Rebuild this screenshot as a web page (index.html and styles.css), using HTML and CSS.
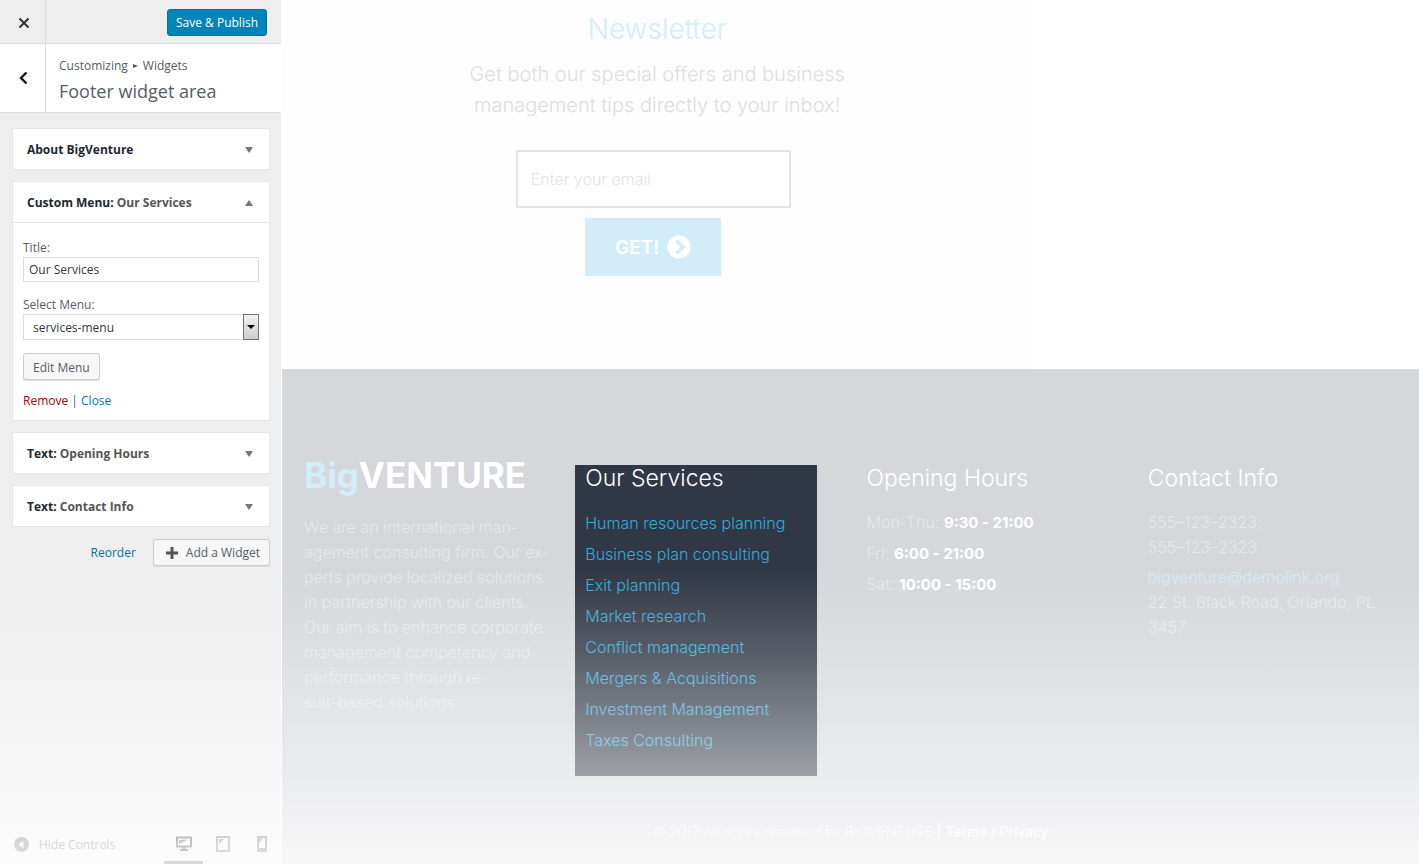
FILE: index.html
```html
<!DOCTYPE html>
<html lang="en">
<head>
<meta charset="utf-8">
<title>Customize: Footer widget area</title>
<link rel="stylesheet" href="styles.css">
</head>
<body>
<div class="app">
  <aside class="panel">
    <header class="panel-top">
      <button class="close" type="button" aria-label="Close customizer"><svg width="12" height="12" viewBox="0 0 12 12"><path d="M1.500 1.500l9 9m0-9l-9 9" stroke="#333" stroke-width="2"/></svg></button>
      <button class="btn-primary" type="button">Save &amp; Publish</button>
    </header>
    <div class="panel-title">
      <button class="back" type="button" aria-label="Back"><svg width="9" height="14" viewBox="0 0 9 14"><path d="M7.500 1.500L2 7l5.500 5.500" fill="none" stroke="#111" stroke-width="2.400"/></svg></button>
      <div class="titles">
        <p class="crumbs">Customizing <svg width="5" height="4" viewBox="0 0 5 4"><path d="M0 0l5 2-5 2z" fill="#555"/></svg> Widgets</p>
        <h1>Footer widget area</h1>
      </div>
    </div>
    <div class="widgets">
      <section class="widget"><button class="widget-head" type="button"><span>About BigVenture</span><i class="caret"></i></button></section>
      <section class="widget">
        <button class="widget-head" type="button"><span>Custom Menu: <em>Our Services</em></span><i class="caret up"></i></button>
        <div class="widget-body">
          <label for="title">Title:</label>
          <input class="field" id="title" type="text" value="Our Services">
          <label for="menu" class="menu-label">Select Menu:</label>
          <div class="select-wrap">
            <select id="menu" class="field"><option>services-menu</option></select>
            <span class="drop"><svg width="8" height="4" viewBox="0 0 8 4"><path d="M0 0h8L4 4z" fill="#000"/></svg></span>
          </div>
          <button class="btn edit" type="button">Edit Menu</button>
          <p class="links"><a class="remove" href="#">Remove</a> | <a href="#">Close</a></p>
        </div>
      </section>
      <section class="widget"><button class="widget-head" type="button"><span>Text: <em>Opening Hours</em></span><i class="caret"></i></button></section>
      <section class="widget"><button class="widget-head" type="button"><span>Text: <em>Contact Info</em></span><i class="caret"></i></button></section>
      <div class="widget-actions">
        <a href="#">Reorder</a>
        <button class="btn add" type="button"><svg width="12" height="12" viewBox="0 0 12 12"><path d="M6 0v12M0 6h12" stroke="#555" stroke-width="3"/></svg>Add a Widget</button>
      </div>
    </div>
    <footer class="panel-foot">
      <button class="hide" type="button"><svg width="15" height="15" viewBox="0 0 15 15"><circle cx="7.500" cy="7.500" r="7.500" fill="#555d66"/><path d="M9.500 3.500v8l-5-4z" fill="#eee"/></svg>Hide Controls</button>
      <div class="devices">
        <button class="device active" type="button" aria-label="Desktop"><svg width="16" height="16" viewBox="0 0 16 16"><path d="M1 1.500h14v9H1z" fill="none" stroke="#111" stroke-width="2"/><path d="M3 8V4l9-.500z" fill="#333"/><path d="M6.500 11h3v2H12v2H4v-2h2.500z" fill="#111"/></svg></button>
        <button class="device" type="button" aria-label="Tablet"><svg width="14" height="16" viewBox="0 0 14 16"><path d="M1 1h12v14H1z" fill="none" stroke="#555d66" stroke-width="2"/><path d="M3 8V3h5z" fill="#555d66"/></svg></button>
        <button class="device" type="button" aria-label="Mobile"><svg width="10" height="16" viewBox="0 0 10 16"><path d="M1 1h8v12.500H1z" fill="none" stroke="#555d66" stroke-width="2"/><path d="M0 12h10v4H0zM2 7V2.500h4z" fill="#555d66"/></svg></button>
      </div>
    </footer>
  </aside>
  <main class="site">
    <section class="news">
      <div class="news-inner">
        <h2>Newsletter</h2>
        <p>Get both our special offers and business<br>management tips directly to your inbox!</p>
        <form class="signup">
          <input type="email" placeholder="Enter your email" aria-label="Enter your email">
          <button type="button">GET! <svg width="24" height="24" viewBox="0 0 24 24"><circle cx="12" cy="12" r="11.500" fill="#fff"/><path d="M9.500 5.500L16 12l-6.500 6.500" fill="none" stroke="#d3edf8" stroke-width="3.800"/></svg></button>
        </form>
      </div>
    </section>
    <footer class="foot">
      <div class="cols">
        <div class="col about">
          <div class="logo"><span>Big</span>VENTURE</div>
          <p>We are an international man-<br>agement consulting firm. Our ex-<br>perts provide localized solutions<br>in partnership with our clients.<br>Our aim is to enhance corporate<br>management competency and<br>performance through re-<br>sult-based solutions.</p>
        </div>
        <div class="col-wrap">
          <nav class="services">
            <h3>Our Services</h3>
            <ul>
              <li><a href="#">Human resources planning</a></li>
              <li><a href="#">Business plan consulting</a></li>
              <li><a href="#">Exit planning</a></li>
              <li><a href="#">Market research</a></li>
              <li><a href="#">Conflict management</a></li>
              <li><a href="#">Mergers &amp; Acquisitions</a></li>
              <li><a href="#">Investment Management</a></li>
              <li><a href="#">Taxes Consulting</a></li>
            </ul>
          </nav>
        </div>
        <div class="col hours">
          <h3>Opening Hours</h3>
          <p>Mon-Thu: <b>9:30 - 21:00</b></p>
          <p>Fri: <b>6:00 - 21:00</b></p>
          <p>Sat: <b>10:00 - 15:00</b></p>
        </div>
        <div class="col contact">
          <h3>Contact Info</h3>
          <p>555–123–2323;<br>555–123–2323</p>
          <p><a href="#">bigventure@demolink.org</a></p>
          <p>22 St. Black Road, Orlando, PL<br>3457</p>
        </div>
      </div>
      <p class="copy">© 2017 All rights reserved by BIGVENTURE <span>| <a href="#">Terms</a> / <a href="#">Privacy</a></span></p>
    </footer>
  </main>
</div>
</body>
</html>
```
FILE: styles.css
```css
* { box-sizing: border-box; }
body, h1, h2, h3, p, ul { margin: 0; padding: 0; }
body { background: #fff; }
ul { list-style: none; }
a { text-decoration: none; }
button, input, select { font: inherit; color: inherit; margin: 0; border-radius: 0; }
button { border: 0; background: none; padding: 0; cursor: pointer; }
svg { display: block; flex: none; }

.app {
  position: relative;
  display: grid;
  grid-template-columns: 281px 1fr;
  column-gap: 1px;
  min-height: 100vh;
}
/* Fade to white towards the bottom of the page */
.app::after {
  content: "";
  position: absolute;
  inset: 0;
  pointer-events: none;
  background: linear-gradient(rgba(255,255,255,0) 66%, rgba(255,255,255,.18) 75%, rgba(255,255,255,.53) 90%, rgba(255,255,255,.82));
}

/* Customizer panel */
.panel {
  display: flex;
  flex-direction: column;
  background: #eee;
  color: #555d66;
  font: 12px/18px "Open Sans", "Noto Sans", sans-serif;
}
.panel a { color: #0073aa; }
.panel-top {
  display: flex;
  align-items: center;
  justify-content: space-between;
  height: 44px;
  padding-right: 14px;
  border-bottom: 1px solid #ddd;
}
.close, .back {
  display: flex;
  align-items: center;
  justify-content: center;
  align-self: stretch;
  width: 46px;
  padding-left: 2px;
  padding-top: 2px;
  border-right: 1px solid #ddd;
}
.back { padding-top: 0; }
.btn-primary {
  height: 27px;
  margin-top: 2px;
  padding: 0 8px;
  border: 1px solid #0073aa;
  border-radius: 3px;
  background: #0085ba;
  color: #fff;
}
.panel-title {
  display: flex;
  height: 69px;
  background: #fff;
  border-bottom: 1px solid #ddd;
}
.titles { padding: 13px 13px 0; }
.crumbs { display: flex; align-items: center; gap: 5px; }
.titles h1 { font-size: 18px; line-height: 32px; font-weight: 400; }
.widgets {
  flex: 1;
  display: flex;
  flex-direction: column;
  gap: 11px;
  padding: 15px 11px 20px 12px;
}
.widget { background: #fff; border: 1px solid #e6e6e6; }
.widget-head {
  display: flex;
  align-items: center;
  justify-content: space-between;
  width: 100%;
  height: 40px;
  padding: 2px 16px 0 14px;
  color: #23282d;
  font-weight: 700;
}
.widget-head em { font-style: normal; color: #555; }
.caret {
  border: 4px solid transparent;
  border-top: 6px solid #72777c;
  border-bottom: 0;
}
.caret.up { border-top: 0; border-bottom: 6px solid #72777c; }
.widget-body {
  display: flex;
  flex-direction: column;
  align-items: stretch;
  padding: 16px 10px 10px;
  border-top: 1px solid #e5e5e5;
}
.field {
  width: 100%;
  height: 25px;
  padding: 0 5px;
  border: 1px solid #ddd;
  background: #fff;
  color: #32373c;
}
.menu-label { margin-top: 14px; }
.select-wrap { position: relative; height: 26px; }
.select-wrap .field { height: 26px; padding: 2px 9px 0; appearance: none; }
.drop {
  position: absolute;
  top: 0;
  right: 0;
  bottom: 0;
  width: 16px;
  display: flex;
  align-items: center;
  justify-content: center;
  border: 1px solid #707070;
  background: linear-gradient(#f2f2f2, #ccc);
  pointer-events: none;
}
.btn {
  height: 27px;
  padding: 2px 9px 0;
  border: 1px solid #ccc;
  border-radius: 3px;
  background: #f7f7f7;
  box-shadow: 0 1px 0 #ddd;
}
.edit { align-self: flex-start; margin-top: 13px; }
.links { margin-top: 12px; }
.panel .remove { color: #a00; }
.widget-actions {
  display: flex;
  align-items: center;
  justify-content: flex-end;
  gap: 17px;
  padding-top: 1px;
}
.add { display: flex; align-items: center; gap: 8px; padding: 1px 9px 0 12px; }
.panel-foot {
  display: flex;
  align-items: stretch;
  justify-content: space-between;
  height: 42px;
  padding-left: 14px;
  border-top: 1px solid #ddd;
  color: #555d66;
}
.hide { display: flex; align-items: center; gap: 10px; padding-top: 2px; }
.devices { display: flex; }
.device {
  display: flex;
  align-items: center;
  justify-content: center;
  width: 39px;
  padding-top: 4px;
  border-bottom: 3px solid transparent;
}
.device.active { border-bottom-color: #23282d; }

/* Site preview */
.site {
  display: flex;
  flex-direction: column;
  color: #dedede;
  font: 300 16px/25px Inter, "Open Sans", sans-serif;
}
.news { background: #fefefe; }
.news-inner { width: 66%; padding: 9px 0 93px; text-align: center; background: #fdfdfd; }
.news h2 { font-size: 28px; line-height: 40px; font-weight: 300; color: #d3edf8; }
.news p { margin-top: 10px; font-size: 20px; line-height: 31px; }
.signup {
  display: flex;
  flex-direction: column;
  align-items: center;
  gap: 10px;
  margin-top: 29px;
  padding-right: 8px;
}
.signup input {
  width: 275px;
  height: 58px;
  padding: 0 13px;
  border: 2px solid #e4e4e4;
  background: #fefefe;
}
.signup input::placeholder { color: #e4e4e4; opacity: 1; }
.signup button {
  display: flex;
  align-items: center;
  gap: 8px;
  height: 58px;
  padding: 0 30px;
  background: #d3edf8;
  color: #fff;
  font-size: 19px;
  font-weight: 600;
}
.foot {
  flex: 1;
  display: flex;
  flex-direction: column;
  justify-content: space-between;
  padding: 96px 0 20px 12px;
  background: #d6d7db;
  color: #e7e8ea;
}
.cols { display: grid; grid-template-columns: repeat(4, 1fr); }
.col { padding: 0 10px; white-space: nowrap; }
.logo {
  margin-top: -8px;
  font-size: 35px;
  line-height: 36px;
  font-weight: 700;
  color: #fff;
}
.logo span { color: #d3edf8; }
.about p { margin-top: 22px; }
.foot h3 { font-size: 23px; line-height: 26px; font-weight: 300; color: #fff; }
.services {
  width: 242px;
  padding: 0 10px 20px;
  background: #303845;
}
.services ul { padding-top: 17px; }
.services li { line-height: 31px; }
.services a { color: #36a9dc; }
.hours h3, .contact h3 { margin-bottom: 19px; }
.hours p { line-height: 30px; margin-top: -3px; padding-bottom: 3px; }
.hours b { font-size: 15px; color: #fff; font-weight: 700; }
.contact a { color: #d3edf8; }
.contact p + p { margin-top: 5px; }
.contact p + p + p { margin-top: 0; }
.copy { font-size: 14px; line-height: 24px; color: #f2f2f4; text-align: center; padding-right: 12px; }
.copy span, .copy span a { color: #fff; font-weight: 400; }
```
